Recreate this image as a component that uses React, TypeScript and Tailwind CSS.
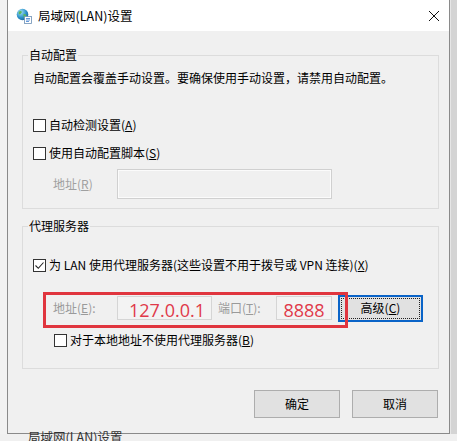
import React from "react";

function Check({ checked }: { checked?: boolean }) {
  return (
    <span className="flex h-[13px] w-[13px] shrink-0 items-center justify-center border border-[#333] bg-white">
      {checked && (
        <svg width="11" height="11" viewBox="0 0 11 11">
          <path d="M1.5 5.5 L4.3 8.3 L9.5 2.5" fill="none" stroke="#222" strokeWidth="1.1" />
        </svg>
      )}
    </span>
  );
}

function CheckRow({ checked, label, keyChar, tail }: { checked?: boolean; label: string; keyChar: string; tail?: string }) {
  return (
    <div className="flex h-[16px] items-center gap-[3px]">
      <Check checked={checked} />
      <span className="leading-[16px]">
        {label}(<span className="underline">{keyChar}</span>){tail}
      </span>
    </div>
  );
}

function GroupBox({ title, className, children }: { title: string; className?: string; children: React.ReactNode }) {
  return (
    <div className={"relative border border-[#dcdcdc] " + (className ?? "")}>
      <span className="absolute left-[5px] top-[-9px] bg-[#f0f0f0] px-[1px] leading-[16px]">{title}</span>
      {children}
    </div>
  );
}

function WinIcon() {
  return (
    <svg width="16" height="16" viewBox="0 0 16 16">
      <defs>
        <radialGradient id="g" cx="0.35" cy="0.3" r="0.8">
          <stop offset="0" stopColor="#9fe0f5" />
          <stop offset="0.6" stopColor="#2a8fc9" />
          <stop offset="1" stopColor="#1a5f96" />
        </radialGradient>
      </defs>
      <circle cx="6.5" cy="6.5" r="5.8" fill="url(#g)" />
      <path d="M3 3.5 Q5 2.5 6 4 Q5 6 3.2 6.5 Q2 5 3 3.5Z" fill="#5cb85c" />
      <path d="M7.5 6 Q10 5.5 10.5 8 Q9 10 7.5 9.5Z" fill="#5cb85c" />
      <rect x="8.5" y="8.5" width="7" height="7" fill="#fff" stroke="#6b8fb5" strokeWidth="0.8" />
      <path d="M10 10.5 H14 M10 12 H14 M10 13.5 H13" stroke="#3d7fd0" strokeWidth="0.8" />
    </svg>
  );
}

export default function App() {
  return (
    <div className="flex h-[441px] w-[457px] flex-col overflow-hidden bg-[#f0f0f0] font-['Noto_Sans_CJK_SC','Microsoft_YaHei',sans-serif] text-[12px] text-black">
      <div className="flex">
        <div className="w-[7px] shrink-0 bg-[#f2f2f2]" />
        <div className="flex h-[434px] w-[443px] shrink-0 flex-col border-x border-b border-[#8a8a8a] bg-[#f0f0f0]">
          <div className="flex h-[31px] items-center bg-white pl-[8px] pr-[8px]">
            <WinIcon />
            <span className="ml-[6px] text-[12.5px] leading-[16px]">局域网(LAN)设置</span>
            <svg className="ml-auto mr-[1px]" width="12" height="12" viewBox="0 0 12 12">
              <path d="M1 1 L11 11 M11 1 L1 11" stroke="#111" strokeWidth="1" />
            </svg>
          </div>

          <div className="flex flex-col pl-[14px] pr-[10px] pt-[24px]">
            <GroupBox title="自动配置" className="pb-[9px]">
              <div className="mt-[14px] pl-[10px] leading-[16px]">
                自动配置会覆盖手动设置。要确保使用手动设置，请禁用自动配置。
              </div>
              <div className="mt-[31px] pl-[10px]">
                <CheckRow label="自动检测设置" keyChar="A" />
              </div>
              <div className="mt-[12px] pl-[10px]">
                <CheckRow label="使用自动配置脚本" keyChar="S" />
              </div>
              <div className="mt-[8px] flex h-[30px] items-center pl-[30px]">
                <span className="w-[64px] text-[#a0a0a0]">
                  地址(<span className="underline">R</span>)
                </span>
                <div className="h-[30px] w-[215px] border border-[#d0d0d0] bg-[#f0f0f0] shadow-[inset_0_0_0_1px_#fbfbfb]" />
              </div>
            </GroupBox>

            <GroupBox title="代理服务器" className="mt-[17px] pb-[20px]">
              <div className="mt-[30px] pl-[10px]">
                <CheckRow checked label="为 LAN 使用代理服务器(这些设置不用于拨号或 VPN 连接)" keyChar="X" />
              </div>
              <div className="relative mt-[23px] ml-[30px] flex h-[24px] items-center">
                <span className="w-[64px] text-[#9a9a9a]">
                  地址(<span className="underline">E</span>):
                </span>
                <div className="flex h-[24px] w-[95px] items-center justify-center border border-[#d5d5d5] bg-[#f3f3f3] pt-[5px] pl-[5px] font-['Open_Sans',sans-serif] text-[18px] text-[#e0394a]">
                  127.0.0.1
                </div>
                <span className="ml-[6px] w-[58px] text-[#9a9a9a]">
                  端口(<span className="underline">T</span>):
                </span>
                <div className="flex h-[24px] w-[56px] items-center justify-center border border-[#d5d5d5] bg-[#f3f3f3] pt-[5px] font-['Open_Sans',sans-serif] text-[18px] text-[#e0394a]">
                  8888
                </div>
                <button className="ml-[6px] flex h-[27px] w-[85px] items-center justify-center border-2 border-[#0a64c8] bg-[#e1e1e1] outline-1 outline-dotted -outline-offset-4 outline-[#222]">
                  高级(<span className="underline">C</span>)
                </button>
                <div className="pointer-events-none absolute left-[-10px] top-[-4px] h-[36px] w-[305px] border-[3px] border-[#e0353e]" />
              </div>
              <div className="mt-[12px] pl-[31px]">
                <CheckRow label="对于本地地址不使用代理服务器" keyChar="B" />
              </div>
            </GroupBox>

            <div className="mt-[21px] flex justify-end gap-[12px] pr-[1px]">
              <button className="h-[28px] w-[86px] border border-[#adadad] bg-[#e1e1e1]">确定</button>
              <button className="h-[28px] w-[86px] border border-[#adadad] bg-[#e1e1e1]">取消</button>
            </div>
          </div>
        </div>
        <div className="flex-1 border-l border-[#e6e6e6] bg-[#d4d4d4]" />
      </div>
      <div className="-mt-[5px] pl-[28px] text-[12.5px] leading-[16px] text-[#333]">局域网(LAN)设置</div>
    </div>
  );
}
